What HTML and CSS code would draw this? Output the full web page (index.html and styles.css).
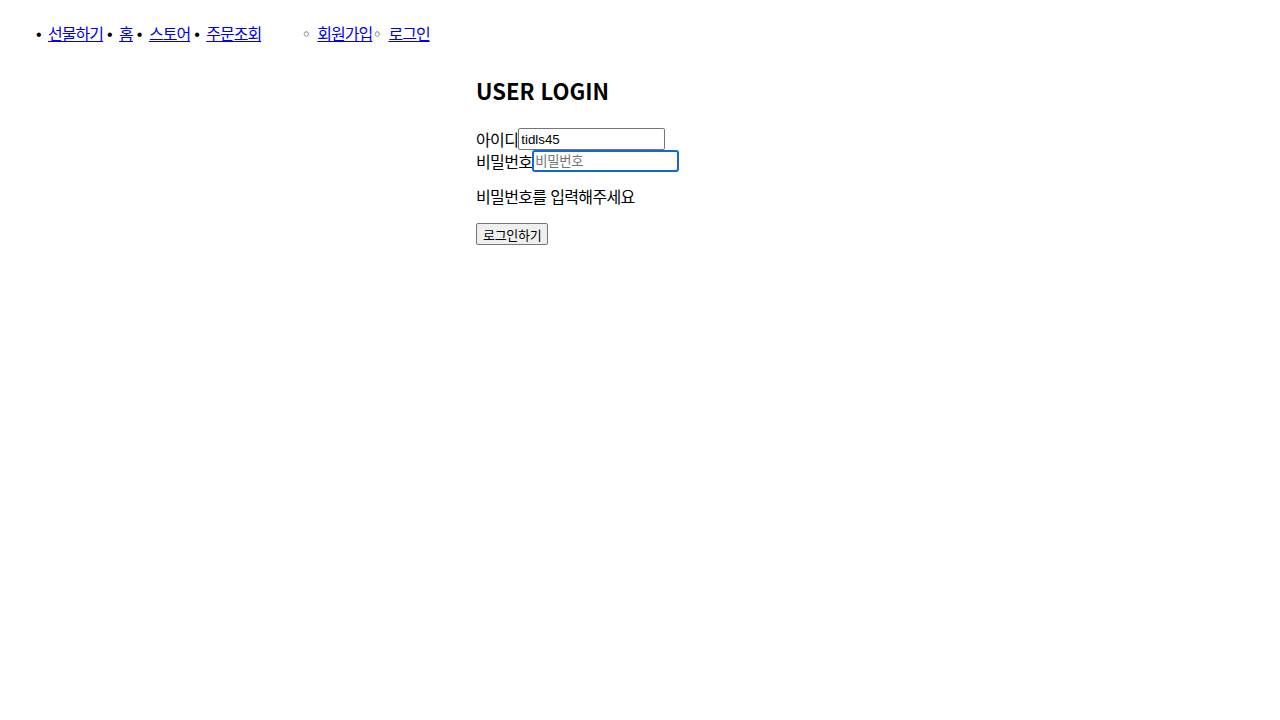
FILE: index.html
```html
<!DOCTYPE html>
<html lang="ko">
<head>
<meta charset="utf-8">
<title>로그인</title>
<link rel="stylesheet" href="styles.css">
</head>
<body>
<header class="top-nav">
  <ul class="menu">
    <li><a href="#">선물하기</a></li>
    <li><a href="#">홈</a></li>
    <li><a href="#">스토어</a></li>
    <li><a href="#">주문조회</a></li>
  </ul>
  <ul class="menu menu-user">
    <li><a href="#">회원가입</a></li>
    <li><a href="#">로그인</a></li>
  </ul>
</header>
<main class="login">
  <h2 class="login-title">USER LOGIN</h2>
  <form class="login-form">
    <div class="field"><label for="uid">아이디</label><input id="uid" class="text-input" type="text" value="tidls45"></div>
    <div class="field"><label for="upw">비밀번호</label><input id="upw" class="text-input is-focused" type="password" placeholder="비밀번호"></div>
    <p class="message">비밀번호를 입력해주세요</p>
    <button type="button" class="submit">로그인하기</button>
  </form>
</main>
</body>
</html>
```

FILE: styles.css
```css
body {
  margin: 8px;
  font-family: "Noto Sans CJK KR", "Noto Sans", sans-serif;
  font-size: 16px;
  color: #000;
  background: #fff;
}

.top-nav {
  display: flex;
  padding-top: 6px;
}

.menu {
  display: flex;
  margin: 8px 0;
  padding-left: 40px;
  list-style: disc;
}

.menu li {
  margin-right: 16px;
  line-height: 22px;
}

.menu li::marker {
  font-family: "Liberation Sans", Arial, sans-serif;
  content: "\2022\2009\2009";
}

.menu-user li::marker {
  font-family: "DejaVu Sans", sans-serif;
  font-size: 16px;
  content: "\25E6\2009\2009";
  color: #222;
}

.menu a {
  color: #0000ee;
  letter-spacing: -0.95px;
}

.login {
  width: 328px;
  margin: 0 auto;
}

.login-title {
  margin: 23px 0 23px;
  font-size: 22px;
  line-height: 30px;
  font-weight: 700;
}

.field {
  display: flex;
  align-items: center;
  height: 22px;
}

.field label {
  letter-spacing: -0.65px;
}

.text-input {
  box-sizing: border-box;
  width: 147px;
  height: 22px;
  padding: 1px 2px;
  border: 1px solid #767676;
  border-radius: 2px;
  font-family: "Liberation Sans", Arial, sans-serif;
  font-size: 13.33px;
  color: #000;
}

.text-input::placeholder {
  font-family: "Noto Sans CJK KR", sans-serif;
  color: #757575;
  letter-spacing: -0.25px;
}

.is-focused {
  border: 2px solid #1465d6;
  border-radius: 3px;
  padding: 0 1px;
}

.message {
  margin: 13px 0 14px;
  line-height: 22px;
  letter-spacing: -0.65px;
}

.submit {
  box-sizing: border-box;
  height: 22px;
  padding: 1px 6px;
  font-family: "Noto Sans CJK KR", sans-serif;
  font-size: 13px;
  letter-spacing: -0.3px;
  background: #efefef;
  border: 1px solid #767676;
  border-radius: 2px;
  color: #000;
}
```
